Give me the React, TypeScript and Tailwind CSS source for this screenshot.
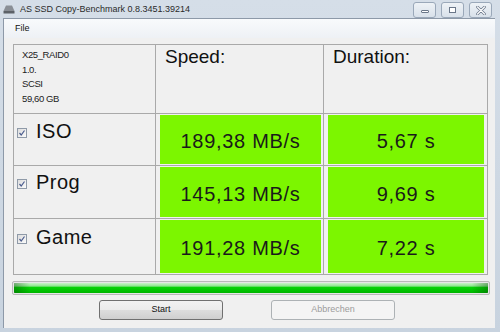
import React from "react";

const rows = [
  { name: "ISO", speed: "189,38 MB/s", time: "5,67 s", h: "pt-[6px]" },
  { name: "Prog", speed: "145,13 MB/s", time: "9,69 s", h: "pt-[5px]" },
  { name: "Game", speed: "191,28 MB/s", time: "7,22 s", h: "pt-[7px]" },
];

function Check() {
  return (
    <div className="mt-[8px] w-[10px] h-[10px] shrink-0 border border-[#8f9aa8] bg-[linear-gradient(135deg,#dcdcdc,#fbfbfb)] flex items-center justify-center">
      <svg width="8" height="8" viewBox="0 0 8 8">
        <path d="M1.5 4 L3.2 6 L6.5 1.5" fill="none" stroke="#4a5c8e" strokeWidth="1.2" />
      </svg>
    </div>
  );
}

function CapButton({ children }: { children: React.ReactNode }) {
  return (
    <div className="w-[23px] h-[16px] rounded-[3px] border border-[#9aa8b9] bg-[linear-gradient(#eef2f6,#d9e1ea)] flex items-center justify-center">
      {children}
    </div>
  );
}

export default function App() {
  return (
    <div className="w-[500px] h-[332px] overflow-hidden flex flex-col bg-[linear-gradient(#d5dee8,#c8d3df)] font-['Liberation_Sans',Arial,sans-serif] text-[#111]">
      {/* title bar */}
      <div className="h-[18px] flex items-center relative shrink-0">
        <svg className="ml-[3px]" width="12" height="9" viewBox="0 0 12 9">
          <path d="M3 0.5 H9 L11.5 6 H0.5 Z" fill="#8a8f96" />
          <rect x="0.5" y="6" width="11" height="2.5" fill="#5d6268" />
        </svg>
        <span className="ml-[5px] text-[9px] text-[#2a2a2a] mt-[1px]">AS SSD Copy-Benchmark 0.8.3451.39214</span>
        <div className="absolute right-[8px] top-[2px] flex gap-[5px]">
          <CapButton>
            <div className="w-[8px] h-[3px] border border-[#6a7789] bg-white rounded-[1px] mt-[3px]" />
          </CapButton>
          <CapButton>
            <div className="w-[7px] h-[6px] border border-[#6a7789] bg-white" />
          </CapButton>
          <CapButton>
            <svg width="10" height="9" viewBox="0 0 10 9">
              <path d="M1.5 1 L8.5 8 M8.5 1 L1.5 8" stroke="#6a7789" strokeWidth="2.6" strokeLinecap="round" />
              <path d="M1.5 1 L8.5 8 M8.5 1 L1.5 8" stroke="#ffffff" strokeWidth="1.2" strokeLinecap="round" />
            </svg>
          </CapButton>
        </div>
      </div>

      {/* client area */}
      <div className="ml-[3px] mr-[5px] mb-[4px] flex-1 flex flex-col bg-[#f0f0f0] border-l border-t border-[#8d99a8]">
        <div className="h-[19px] shrink-0 flex items-center pl-[11px] bg-[linear-gradient(#f8fafc,#eef1f5)] text-[9px]">
          File
        </div>

        <div className="mt-[6px] ml-[9px] w-[475px] grid grid-cols-[141px_167px_163px] grid-rows-[68px_51px_52px_55px] gap-px bg-[#a9a9a9] border border-[#a9a9a9]">
          <div className="bg-[#f0f0f0] pl-[8px] pt-[3px] text-[9.5px] leading-[14.7px] tracking-[-0.4px] text-[#222]">
            <div>X25_RAID0</div>
            <div>1.0.</div>
            <div>SCSI</div>
            <div>59,60 GB</div>
          </div>
          <div className="bg-[#f0f0f0] pl-[9px] text-[19px] leading-[22px] pt-[1px]">Speed:</div>
          <div className="bg-[#f0f0f0] pl-[9px] text-[19px] leading-[22px] pt-[1px]">Duration:</div>

          {rows.map((r) => (
            <React.Fragment key={r.name}>
              <div className={"bg-[#f0f0f0] flex pl-[3px] " + r.h}>
                <Check />
                <span className="ml-[9px] text-[20px] leading-[23px] tracking-[0.5px]">{r.name}</span>
              </div>
              <div className="bg-[#f0f0f0] flex py-px pl-[4px] pr-[2px]">
                <div className="flex-1 bg-[#7cf600] flex items-center justify-center pt-[3px] text-[20px] tracking-[0.7px] text-[#1a1a1a]">
                  {r.speed}
                </div>
              </div>
              <div className="bg-[#f0f0f0] flex py-px pl-[4px] pr-[3px]">
                <div className="flex-1 bg-[#7cf600] flex items-center justify-center pt-[3px] text-[20px] tracking-[0.7px] text-[#1a1a1a]">
                  {r.time}
                </div>
              </div>
            </React.Fragment>
          ))}
        </div>

        {/* progress */}
        <div className="mt-[6px] ml-[8px] w-[478px] h-[14px] border border-[#b8b8b8] rounded-[2px] p-px bg-[#e6e6e6]">
          <div className="h-full rounded-[1px] bg-[linear-gradient(#c9f3c9_0%,#8fe68f_30%,#06d206_45%,#00c000_80%,#00b400_100%)] relative">
            <div className="absolute inset-y-0 left-0 w-[16px] bg-[linear-gradient(90deg,rgba(0,70,0,0.4),rgba(0,70,0,0))]" />
            <div className="absolute inset-y-0 right-0 w-[16px] bg-[linear-gradient(270deg,rgba(0,70,0,0.4),rgba(0,70,0,0))]" />
          </div>
        </div>

        {/* buttons */}
        <div className="mt-[5px] ml-[95px] flex gap-[48px] text-[9px]">
          <div className="w-[124px] h-[20px] rounded-[3px] border border-[#707070] bg-[linear-gradient(#f2f2f2_0%,#ebebeb_50%,#dddddd_51%,#cfcfcf_100%)] flex items-center justify-center">
            Start
          </div>
          <div className="w-[124px] h-[20px] rounded-[3px] border border-[#adb2b5] bg-[#f4f4f4] text-[#9c9c9c] flex items-center justify-center">
            Abbrechen
          </div>
        </div>
      </div>
    </div>
  );
}
